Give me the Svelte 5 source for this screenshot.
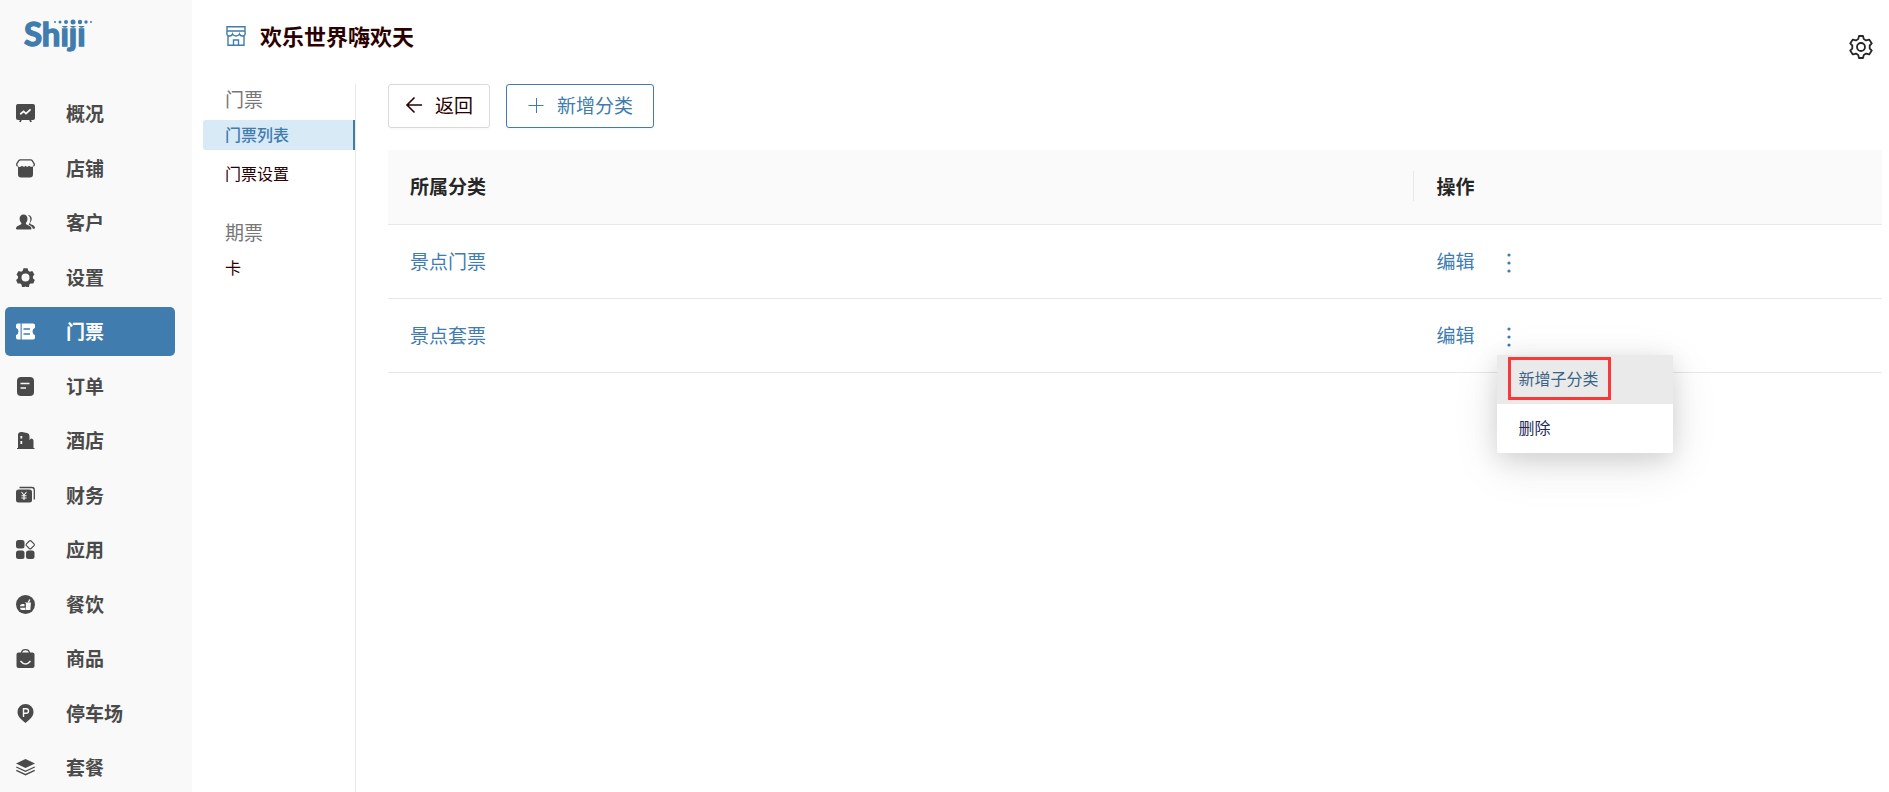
<script lang="ts">
  type NavItem = { label: string; icon: string };

  // icon bodies on a 19x19 grid, "cut" strokes take the item's background
  const nav: NavItem[] = [
    { label: '概况', icon: '<rect width="19" height="16" y="0" rx="2"/><path d="M5 15.5 4 18M14 15.5 15 18" class="line w2"/><path d="M4.2 10.2 7.6 7.4 10 9.6 14.6 5.4" class="cut w2"/>' },
    { label: '店铺', icon: '<path d="M2 7.2C3 8.3 5 8 6 6.8 7.5 8.4 9 7.8 9.5 6.8 10.5 8 12 8.2 13 6.8 14.4 8 16 8.2 17 7.2V15.5a3 3 0 0 1-3 3H5a3 3 0 0 1-3-3Z"/><path d="M1.6 7.4Q.3 6 .9 4.6L2.8 1.6Q3.3.8 4.3.8H14.7Q15.7.8 16.2 1.6L18.1 4.6Q18.7 6 17.4 7.4" class="line"/>' },
    { label: '客户', icon: '<path d="M7.5 1.5c2.5 0 4 1.8 4 4.2 0 1.8-.6 3.2-1.6 4.2v1.2c1 1 4.6 1.7 5.3 3.3.4.8.3 2-.5 2H.8c-.9 0-1-1.3-.6-2 .8-1.6 4.3-2.3 5.2-3.3V9.9C4.3 8.9 3.6 7.5 3.6 5.7c0-2.4 1.5-4.200 3.900-4.200Z"/><path d="M11.800 2c2.200 0 3.900 1.500 3.900 3.800 0 1.600-.6 2.800-1.500 3.700v1.300c1.200 1 4 1.500 4.600 3.200.3.900 0 1.700-.6 1.700h-1.300c-.4-2.600-3-3.500-4.300-4.300 1.200-1.300 1.700-2.900 1.700-5 0-1.600-.6-3.100-2.500-4.400Z"/>' },
    { label: '设置', icon: '<path fill-rule="evenodd" d="M7.5.3h4l.8 2.500 1.500.9 2.500-.6 2.100 3.300-1.500 2v1.800l1.900 1.700-1.500 3.600-2.700-.1-1.300 1.200-.3 2.300H9.800L9.500 18l-.8.900H6l-.5-2.300-1.300-1.200-2.600.1L.1 11.900 2 10.200V8.400L.5 6.400l2.100-3.300 2.600.6 1.500-.9ZM9.500 5.600a4 4 0 1 0 0 8 4 4 0 0 0 0-8Z"/>' },
    { label: '门票', icon: '<path d="M1.8 1.5H4.6V17.5H1.8A1.8 1.8 0 0 1 0 15.7V13.2Q2.5 12 2.5 9.5T0 5.8V3.3A1.8 1.8 0 0 1 1.8 1.5ZM5.7 1.5H17.2A1.8 1.8 0 0 1 19 3.3V5.8Q16.5 7 16.5 9.5T19 13.2V15.7A1.8 1.8 0 0 1 17.2 17.5H5.7Z"/><path d="M7.5 7H14M7.5 12H14" class="cut"/>' },
    { label: '订单', icon: '<rect x="1" width="17" height="19" rx="4"/><path d="M4.5 6.5H13.5M4.5 11H10" class="cut"/>' },
    { label: '酒店', icon: '<path d="M2 17V3Q3 .5 6 1L11 2Q13.5 2.5 13.5 5V9L15 7.5Q17.5 7.5 17.5 10V17H18.5V18H1V17Z"/><path d="M5.3 5V7.5M5.3 10V13" class="cut w2"/>' },
    { label: '财务', icon: '<rect y="3.5" width="16" height="13" rx="2.5"/><path d="M3.5 1.5H16Q18.3 1.5 18.3 4V13.5" class="line"/><path d="M5.5 6 8 9 10.5 6M8 9V14M5.5 9.8H10.5M5.5 12H10.5" class="cut w1"/>' },
    { label: '应用', icon: '<rect width="8.5" height="8.5" rx="2.5"/><rect y="10.5" width="8.5" height="8.5" rx="2.5"/><rect x="10" y="10.5" width="8.5" height="8.5" rx="2.5"/><path d="M13.3 1Q14.2.2 15.1 1L18 3.9Q18.8 4.8 18 5.7L15.1 8.5Q14.2 9.3 13.3 8.5L10.5 5.7Q9.7 4.8 10.5 3.9Z" class="line w1"/>' },
    { label: '餐饮', icon: '<circle cx="9.5" cy="9.5" r="9.5"/><path d="M9 7.5H15L14.3 15H9.7ZM4 11.5Q4 9 6.5 9H8.5L8.8 11.5ZM4 12.5H9L9.2 15H6Q4 15 4 12.5Z" class="paper"/><path d="M12.3 7.5 13.8 4.5" class="cut"/><path d="M3 12H9.3V8" class="line w1"/>' },
    { label: '商品', icon: '<rect x=".5" y="3.5" width="18" height="15.5" rx="2"/><path d="M5.5 5.5V3.5Q6 .7 9.5.7T13.5 3.5V5.5" class="line"/><path d="M4.5 12Q9.5 18 14.5 12" class="cut"/>' },
    { label: '停车场', icon: '<path d="M9.5 0a8 8 0 0 1 8 8c0 5-4 7.5-8 11-4-3.5-8-6-8-11a8 8 0 0 1 8-8Z"/><path d="M7.5 13V4.8H10.2Q12.5 4.8 12.5 7T10.2 9.3H7.5" class="cut"/>' },
    { label: '套餐', icon: '<path d="M9.5 1 19 5.5 9.5 10 0 5.5Z"/><path d="M.3 9 9.5 13.3 18.7 9M.3 12.3 9.5 16.7 18.7 12.3" class="line"/>' }
  ];

  const groups = [
    { title: '门票', items: ['门票列表', '门票设置'] },
    { title: '期票', items: ['卡'] }
  ];

  const rows = ['景点门票', '景点套票'];

  let activeNav = $state('门票');
  let activeSub = $state('门票列表');
  let openRow = $state(1);

  function toggleMenu(index: number) {
    openRow = openRow === index ? -1 : index;
  }
</script>

<div class="layout">
  <aside class="sidebar">
    <svg class="logo" viewBox="0 0 70 38" role="img" aria-label="Shiji">
      <text x="1" y="29">Shiji</text>
      <!-- the row of dots replaces the ones on i and j -->
      <rect class="mask" x="28" y="0" width="42" height="9" />
      <circle cx="32" cy="5" r="1" />
      <circle cx="37" cy="5" r="1.5" />
      <circle cx="43" cy="5" r="2" />
      <circle cx="50" cy="5" r="2.5" />
      <circle cx="57" cy="5" r="2.2" />
      <circle cx="63" cy="5" r="1.7" />
      <circle cx="68" cy="5" r="1" />
    </svg>
    <nav class="nav">
      {#each nav as item}
        <a
          href="#{item.label}"
          class="nav-item"
          class:active={activeNav === item.label}
          onclick={() => (activeNav = item.label)}
        >
          <svg viewBox="0 0 19 19" aria-hidden="true">{@html item.icon}</svg>
          <span>{item.label}</span>
        </a>
      {/each}
    </nav>
  </aside>

  <div class="page">
    <header class="header">
      <svg class="shop" viewBox="0 0 20 20" aria-hidden="true">
        <path d="M1 .8H19V5H1ZM1 5 .8 7.5Q1 10 3.5 10 6 10 6.5 8 7.5 10 10 10T13.5 8Q14 10 16.5 10 19 10 19.2 7.5L19 5M2 10V19.2H18V10M7.5 19V14H12.5V19" />
      </svg>
      <h1>欢乐世界嗨欢天</h1>
      <button class="gear" aria-label="设置">
        <svg viewBox="0 0 24 24" aria-hidden="true">
          <path d="M10 1H14L14.8 4.1 17 5.4 20.2 4.6 22.8 8.4 20.7 10.5V13.5L22.8 15.6 20.2 19.4 17 18.6 14.8 19.9 14 23H10L9.2 19.9 7 18.6 3.8 19.4 1.2 15.6 3.3 13.5V10.5L1.2 8.4 3.8 4.6 7 5.4 9.2 4.1Z" />
          <circle cx="12" cy="12" r="4" />
        </svg>
      </button>
    </header>

    <div class="body">
      <nav class="subnav">
        {#each groups as group}
          <section>
            <h2>{group.title}</h2>
            {#each group.items as item}
              <a
                href="#{item}"
                class:active={activeSub === item}
                onclick={() => (activeSub = item)}>{item}</a
              >
            {/each}
          </section>
        {/each}
      </nav>

      <main class="content">
        <div class="toolbar">
          <button class="btn">
            <svg viewBox="0 0 18 18" aria-hidden="true"><path d="M17 9H2M9.5 1.5 2 9 9.5 16.5" /></svg>
            返回
          </button>
          <button class="btn primary">
            <svg viewBox="0 0 18 18" aria-hidden="true"><path d="M1.5 9.5H16.5M9.5 2V17" /></svg>
            新增分类
          </button>
        </div>

        <table>
          <thead>
            <tr>
              <th class="name"><div>所属分类</div></th>
              <th>操作</th>
            </tr>
          </thead>
          <tbody>
            {#each rows as row, i}
              <tr>
                <td><a href="#{row}">{row}</a></td>
                <td>
                  <div class="actions">
                    <a href="#edit">编辑</a>
                    <div class="more">
                      <button class="dots" aria-label="更多" aria-expanded={openRow === i} onclick={() => toggleMenu(i)}>
                        <svg viewBox="0 0 4 20" aria-hidden="true">
                          <circle cx="2" cy="2" r="1.6" />
                          <circle cx="2" cy="10" r="1.6" />
                          <circle cx="2" cy="18" r="1.6" />
                        </svg>
                      </button>
                      {#if openRow === i}
                        <div class="menu">
                          <button class="hover"><span>新增子分类</span></button>
                          <button>删除</button>
                        </div>
                      {/if}
                    </div>
                  </div>
                </td>
              </tr>
            {/each}
          </tbody>
        </table>
      </main>
    </div>
  </div>
</div>

<style>
  :global(body) {
    margin: 0;
    background: #fff;
  }

  .layout {
    display: flex;
    min-height: 100vh;
    font-family: "Noto Sans CJK SC", "Noto Sans", sans-serif;
    font-size: 19px;
    line-height: 28px;
    color: #2b0000;
  }

  a {
    color: inherit;
    text-decoration: none;
  }

  button {
    font: inherit;
    color: inherit;
    cursor: pointer;
  }

  .sidebar {
    display: flex;
    flex-direction: column;
    flex: none;
    box-sizing: border-box;
    width: 192px;
    padding: 17px 17px 0 5px;
    background: #f9f9f9;
  }

  .logo {
    width: 70px;
    height: 38px;
    margin: 0 0 34px 18px;
    overflow: visible;
    fill: #407cad;
  }

  .logo text {
    font: bold 33px Lato, sans-serif;
    stroke: #407cad;
    stroke-width: 1.4;
  }

  .logo .mask {
    fill: #f9f9f9;
  }

  .nav {
    display: flex;
    flex: 1;
    flex-direction: column;
    justify-content: space-between;
  }

  .nav-item {
    --paper: #f9f9f9;
    display: flex;
    align-items: center;
    gap: 31px;
    height: 49px;
    padding-left: 11px;
    border-radius: 5px;
    font-weight: 700;
    color: #4a4a4a;
  }

  .nav-item.active {
    --paper: #407cad;
    background: #407cad;
    color: #fff;
  }

  .nav-item span {
    padding-bottom: 1px;
  }

  .nav-item svg {
    flex: none;
    width: 19px;
    height: 19px;
    fill: currentColor;
  }

  .nav-item svg :global(.line) {
    fill: none;
    stroke: currentColor;
    stroke-width: 1.3;
  }

  .nav-item svg :global(.cut) {
    fill: none;
    stroke: var(--paper);
    stroke-width: 1.4;
  }

  .nav-item svg :global(.paper) {
    fill: var(--paper);
  }

  .nav-item svg :global(.w1) {
    stroke-width: 1.1;
  }

  .nav-item svg :global(.w2) {
    stroke-width: 1.8;
  }

  .page {
    display: flex;
    flex: 1;
    flex-direction: column;
    min-width: 0;
  }

  .header {
    display: flex;
    align-items: flex-start;
    height: 64px;
    padding: 20px 16px 0 34px;
  }

  .shop {
    width: 20px;
    height: 20px;
    margin: 6px 14px 0 0;
    fill: none;
    stroke: #407cad;
    stroke-width: 1.4;
  }

  h1 {
    margin: 0;
    font-size: 22px;
    line-height: 30px;
  }

  .gear {
    margin: 15px 0 0 auto;
    padding: 0;
    border: 0;
    background: none;
    line-height: 0;
  }

  .gear svg {
    width: 24px;
    height: 24px;
    fill: none;
    stroke: #262626;
    stroke-width: 1.8;
    stroke-linejoin: round;
  }

  .body {
    display: flex;
    flex: 1;
  }

  .subnav {
    display: flex;
    flex: none;
    flex-direction: column;
    gap: 28px;
    box-sizing: border-box;
    width: 164px;
    padding-left: 11px;
    border-right: 1px solid #e8e8e8;
    font-size: 16px;
  }

  .subnav section {
    display: flex;
    flex-direction: column;
  }

  h2 {
    margin: 0 0 6px;
    padding-left: 22px;
    font-size: 19px;
    font-weight: 400;
    line-height: 30px;
    color: #777;
  }

  .subnav a {
    padding: 0 0 2px 22px;
    border-right: 2px solid transparent;
    border-radius: 3px 0 0 3px;
    line-height: 28px;
  }

  .subnav a + a {
    margin-top: 9px;
  }

  .subnav a.active {
    border-color: #407cad;
    background: #d9eaf7;
    font-weight: 500;
    color: #407cad;
  }

  .content {
    flex: 1;
    min-width: 0;
    padding: 0 7px 0 32px;
  }

  .toolbar {
    display: flex;
    gap: 16px;
    margin-bottom: 22px;
  }

  .btn {
    display: flex;
    align-items: center;
    gap: 12px;
    height: 44px;
    padding: 0 16px 2px;
    border: 1px solid #d9d9d9;
    border-radius: 3px;
    background: #fff;
    box-shadow: 0 2px 0 rgba(0, 0, 0, 0.02);
  }

  .btn svg {
    width: 18px;
    height: 18px;
    fill: none;
    stroke: currentColor;
    stroke-width: 1.6;
  }

  .btn.primary {
    padding: 0 20px 2px;
    border-color: #407cad;
    color: #407cad;
  }

  .btn.primary svg {
    stroke-width: 1;
  }

  table {
    width: 100%;
    border-collapse: separate;
    border-spacing: 0;
    table-layout: fixed;
  }

  th,
  td {
    box-sizing: border-box;
    height: 74px;
    padding: 0 22px 2px;
    border-bottom: 1px solid #e8e8e8;
    text-align: left;
  }

  th {
    height: 75px;
    background: #fafafa;
    color: #262626;
  }

  th.name {
    width: 68.7%;
    padding-right: 0;
  }

  th.name div {
    border-right: 1px solid #e8e8e8;
    line-height: 30px;
  }

  td {
    color: #407cad;
  }

  .actions {
    display: flex;
    align-items: center;
    gap: 23px;
  }

  .more {
    position: relative;
  }

  .dots {
    display: flex;
    align-items: center;
    justify-content: center;
    width: 24px;
    height: 32px;
    padding: 4px 0 0;
    border: 0;
    background: none;
  }

  .dots svg {
    width: 4px;
    height: 20px;
    fill: currentColor;
  }

  .menu {
    position: absolute;
    top: 36px;
    left: 0;
    z-index: 1;
    width: 176px;
    border-radius: 2px;
    background: #fff;
    box-shadow: 0 12px 48px rgba(0, 0, 0, 0.1), 0 6px 24px rgba(0, 0, 0, 0.12);
    color: #1f2a5a;
  }

  .menu button {
    display: flex;
    align-items: center;
    width: 100%;
    height: 49px;
    padding: 0 21px 2px;
    border: 0;
    background: none;
    font-size: 16px;
  }

  .menu .hover {
    padding: 0 11px 2px;
    background: #eaeaea;
    color: #3a6486;
  }

  .menu .hover span {
    padding: 0 10px 0 7px;
    border: 3px solid #fb3838;
    line-height: 37px;
  }
</style>
